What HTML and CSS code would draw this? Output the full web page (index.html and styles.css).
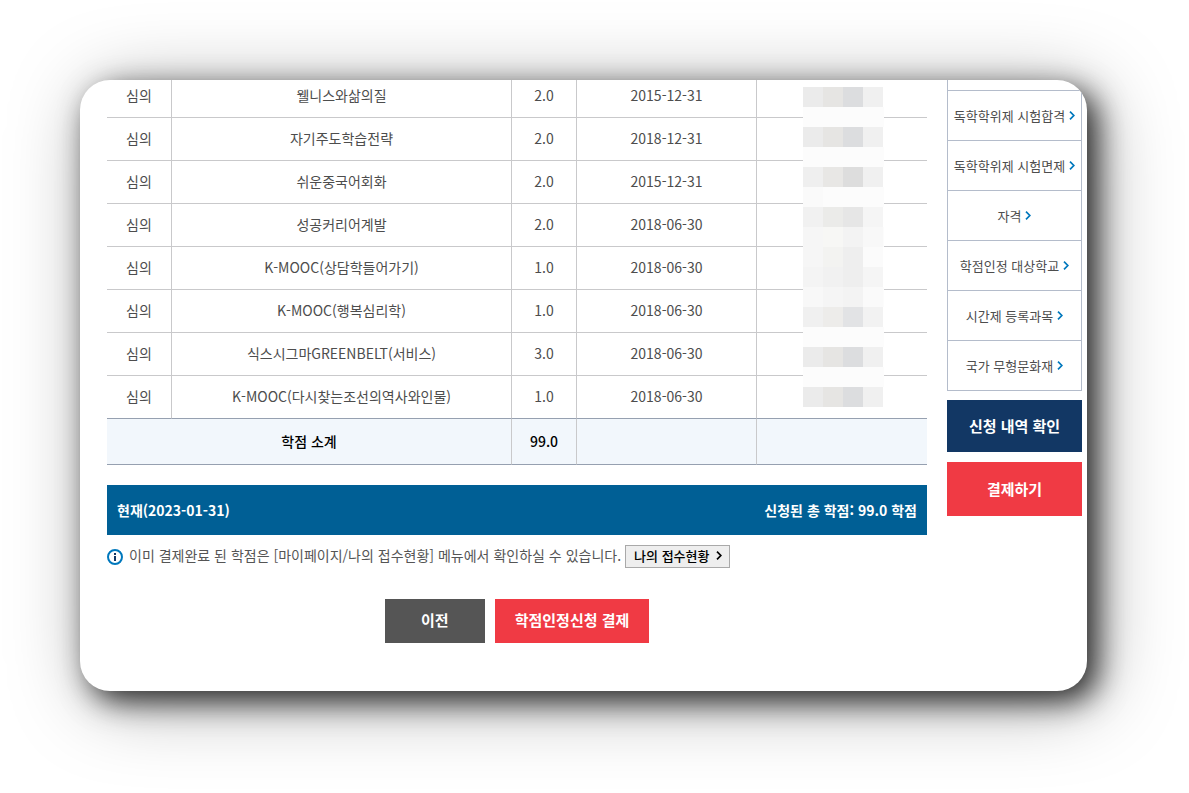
FILE: index.html
```
<!DOCTYPE html>
<html lang="ko">
<head>
<meta charset="utf-8">
<meta name="viewport" content="width=device-width, initial-scale=1">
<title>학점인정신청</title>
<link rel="stylesheet" href="styles.css">
</head>
<body>
<svg class="defs" aria-hidden="true">
  <symbol id="chevron" viewBox="0 0 6 9"><path d="M1 0.7 4.8 4.5 1 8.3" fill="none" stroke="currentColor" stroke-width="1.7"/></symbol>
</svg>
<div class="card">
  <main class="content">
    <div class="table-wrap">
      <table class="credits">
        <colgroup><col class="c-type"><col><col class="c-credit"><col class="c-date"><col class="c-no"></colgroup>
        <tbody>
          <tr><td>심의</td><td>웰니스와삶의질</td><td>2.0</td><td>2015-12-31</td><td></td></tr>
          <tr><td>심의</td><td>자기주도학습전략</td><td>2.0</td><td>2018-12-31</td><td></td></tr>
          <tr><td>심의</td><td>쉬운중국어회화</td><td>2.0</td><td>2015-12-31</td><td></td></tr>
          <tr><td>심의</td><td>성공커리어계발</td><td>2.0</td><td>2018-06-30</td><td></td></tr>
          <tr><td>심의</td><td>K-MOOC(상담학들어가기)</td><td>1.0</td><td>2018-06-30</td><td></td></tr>
          <tr><td>심의</td><td>K-MOOC(행복심리학)</td><td>1.0</td><td>2018-06-30</td><td></td></tr>
          <tr><td>심의</td><td>식스시그마GREENBELT(서비스)</td><td>3.0</td><td>2018-06-30</td><td></td></tr>
          <tr><td>심의</td><td>K-MOOC(다시찾는조선의역사와인물)</td><td>1.0</td><td>2018-06-30</td><td></td></tr>
        </tbody>
        <tfoot>
          <tr><th colspan="2" scope="row">학점 소계</th><td>99.0</td><td></td><td></td></tr>
        </tfoot>
      </table>
      <svg class="mask" width="81" height="320" viewBox="0 0 81 320" shape-rendering="crispEdges" aria-hidden="true">
        <rect width="80" height="320" fill="#fcfcfc"/>
        <path d="M80 20h1v20h-1zM80 60h1v20h-1zM80 100h1v20h-1zM80 140h1v20h-1zM80 200h1v20h-1zM80 240h1v20h-1zM80 280h1v20h-1z" fill="#fcfcfc"/>
        <g fill="#ebebeb"><path d="M0 0h20v20H0zM0 40h20v20H0zM0 260h20v20H0zM0 300h20v20H0z"/></g>
        <g fill="#e6e5e3"><path d="M20 0h20v20H20zM20 40h20v20H20zM20 260h20v20H20zM20 300h20v20H20z"/></g>
        <g fill="#dcdddf"><path d="M40 0h20v20H40zM40 40h20v20H40zM40 260h20v20H40zM40 300h20v20H40z"/></g>
        <g fill="#f0f0f0"><path d="M60 0h20v20H60zM60 40h20v20H60zM60 80h20v20H60zM60 260h20v20H60zM60 300h20v20H60z"/></g>
        <rect y="80" width="20" height="20" fill="#efefef"/><rect x="20" y="80" width="20" height="20" fill="#e8e7e5"/><rect x="40" y="80" width="20" height="20" fill="#dddddd"/>
        <rect y="100" width="20" height="20" fill="#fafafa"/>
        <rect y="120" width="20" height="20" fill="#f1f1f1"/><rect x="20" y="120" width="20" height="20" fill="#ebebe9"/><rect x="40" y="120" width="20" height="20" fill="#e6e6e6"/><rect x="60" y="120" width="20" height="20" fill="#f5f5f5"/>
        <rect y="140" width="20" height="20" fill="#f6f6f6"/><rect x="20" y="140" width="20" height="20" fill="#f7f7f5"/><rect x="40" y="140" width="20" height="20" fill="#f3f3f3"/><rect x="60" y="140" width="20" height="20" fill="#f8f8f8"/>
        <rect y="160" width="20" height="20" fill="#f6f6f6"/><rect x="20" y="160" width="20" height="20" fill="#f3f3f1"/><rect x="40" y="160" width="20" height="20" fill="#eeeeee"/><rect x="60" y="160" width="20" height="20" fill="#fbfbfb"/>
        <rect y="180" width="20" height="20" fill="#f4f4f4"/><rect x="20" y="180" width="20" height="20" fill="#f1f1f1"/><rect x="40" y="180" width="20" height="20" fill="#eeeeee"/><rect x="60" y="180" width="20" height="20" fill="#f5f5f5"/>
        <rect y="200" width="20" height="20" fill="#f8f8f8"/><rect x="20" y="200" width="20" height="20" fill="#f5f5f5"/><rect x="40" y="200" width="20" height="20" fill="#f3f3f3"/><rect x="60" y="200" width="20" height="20" fill="#fafafa"/>
        <rect y="220" width="20" height="20" fill="#f0f0f0"/><rect x="20" y="220" width="20" height="20" fill="#edecea"/><rect x="40" y="220" width="20" height="20" fill="#e2e3e5"/><rect x="60" y="220" width="20" height="20" fill="#f2f2f2"/>
      </svg>
    </div>
    <div class="total"><strong>현재(2023-01-31)</strong><strong>신청된 총 학점: 99.0 학점</strong></div>
    <div class="notice">
      <svg class="info" width="16" height="16" viewBox="0 0 16 16" aria-hidden="true"><circle cx="8" cy="8" r="7" fill="none" stroke="#0078bd" stroke-width="2"/><path d="M7 4h2v2H7zM7 7h2v5H7z" fill="#123764" shape-rendering="crispEdges"/></svg>
      <p class="notice-text">이미 결제완료 된 학점은 [마이페이지/나의 접수현황] 메뉴에서 확인하실 수 있습니다.</p>
      <button class="status" type="button">나의 접수현황 <svg class="chevron" width="6" height="9" aria-hidden="true"><use href="#chevron"/></svg></button>
    </div>
    <div class="actions">
      <button class="btn btn-prev" type="button">이전</button>
      <button class="btn btn-pay" type="button">학점인정신청 결제</button>
    </div>
  </main>
  <aside class="side">
    <ul class="menu">
      <li><a href="#">독학학위제 시험합격<svg class="chevron" width="6" height="9" aria-hidden="true"><use href="#chevron"/></svg></a></li>
      <li><a href="#">독학학위제 시험면제<svg class="chevron" width="6" height="9" aria-hidden="true"><use href="#chevron"/></svg></a></li>
      <li><a href="#">자격<svg class="chevron" width="6" height="9" aria-hidden="true"><use href="#chevron"/></svg></a></li>
      <li><a href="#">학점인정 대상학교<svg class="chevron" width="6" height="9" aria-hidden="true"><use href="#chevron"/></svg></a></li>
      <li><a href="#">시간제 등록과목<svg class="chevron" width="6" height="9" aria-hidden="true"><use href="#chevron"/></svg></a></li>
      <li><a href="#">국가 무형문화재<svg class="chevron" width="6" height="9" aria-hidden="true"><use href="#chevron"/></svg></a></li>
    </ul>
    <button class="side-btn side-check" type="button">신청 내역 확인</button>
    <button class="side-btn side-pay" type="button">결제하기</button>
  </aside>
</div>
</body>
</html>
```
FILE: styles.css
```
* { box-sizing: border-box; }

body {
  margin: 0;
  padding: 80px 102px 102px 80px;
  background: #fff;
  color: #4d4d4d;
  font: 14px/20px "Noto Sans CJK KR", sans-serif;
}

button { margin: 0; border: 0; font: inherit; cursor: pointer; }

.defs { display: none; }

.card {
  display: grid;
  grid-template-columns: minmax(0, 1fr) 135px;
  gap: 20px;
  padding: 0 5px 48px 27px;
  overflow: hidden;
  background: #fff;
  border-radius: 30px;
  box-shadow: 10px 10px 30px rgba(0, 0, 0, 0.8), 10px 10px 80px rgba(0, 0, 0, 0.35);
}

/* The table continues above the top edge of the card. */
.table-wrap { position: relative; margin-top: -5px; }

.credits {
  width: 100%;
  border-collapse: separate;
  border-spacing: 0;
  table-layout: fixed;
  text-align: center;
}
.c-type, .c-credit { width: 65px; }
.c-date { width: 180px; }
.c-no { width: 170px; }

.credits td, .credits th {
  height: 43px;
  padding: 0 0 2px;
  border-right: 1px solid #c9c9cb;
  border-bottom: 1px solid #c9c9cb;
}
.credits tr > :last-child { border-right: 0; }
.credits tbody tr:last-child td { border-bottom-color: #96a0b0; }
.credits tfoot td, .credits tfoot th {
  height: 46px;
  border-bottom-color: #96a0b0;
  background: #f2f7fc;
  color: #000;
  font-weight: 500;
}

.mask { position: absolute; top: 12px; right: 43px; }

.total {
  display: flex;
  align-items: center;
  justify-content: space-between;
  min-height: 50px;
  margin-top: 20px;
  padding: 0 10px;
  background: #005f95;
  color: #fff;
}

.notice { display: flex; align-items: center; margin-top: 10px; }
.info { flex: none; margin-right: 6px; }
.notice-text { margin: 0 4px 0 0; padding-bottom: 3px; color: #555; }
.status {
  display: flex;
  align-items: center;
  gap: 7px;
  height: 23px;
  padding: 0 7px 2px 8px;
  border: 1px solid #a9a9a9;
  background: #eee;
  color: #000;
  font-size: 13px;
  font-weight: 500;
  white-space: nowrap;
}
.chevron { flex: none; }

.actions { display: flex; justify-content: center; gap: 10px; margin-top: 31px; }
.btn { height: 44px; min-width: 100px; padding: 0 20px 2px; color: #fff; font-size: 15px; font-weight: 700; }
.btn-prev { background: #555; }
.btn-pay { background: #f03a44; }

.menu {
  margin: 0 0 9px;
  padding: 10px 0 0;
  border: 1px solid #b4bccb;
  border-top: 0;
  list-style: none;
}
.menu a {
  display: flex;
  align-items: center;
  justify-content: center;
  gap: 4px;
  height: 50px;
  border-top: 1px solid #b4bccb;
  color: #4d4d4d;
  font-size: 13px;
  text-decoration: none;
  white-space: nowrap;
}
.menu .chevron { color: #0078bd; }

.side-btn { display: block; width: 100%; color: #fff; font-size: 15px; font-weight: 700; }
.side-check { height: 52px; background: #123764; }
.side-pay { height: 54px; margin-top: 10px; background: #f03a44; }
```
